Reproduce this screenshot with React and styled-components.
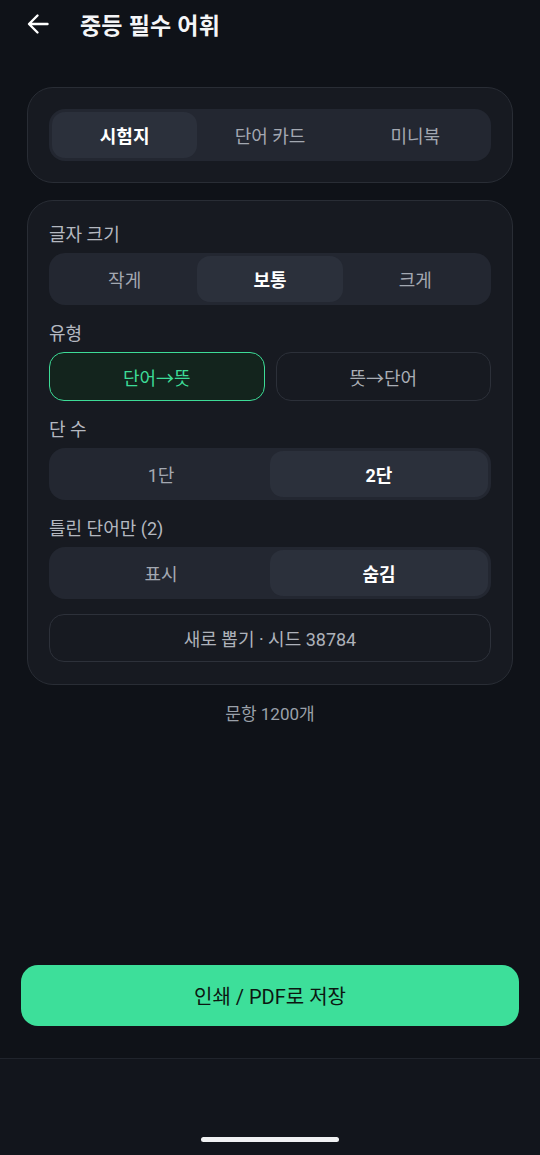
import React, { useState } from "react";
import styled, { createGlobalStyle } from "styled-components";

const GlobalStyle = createGlobalStyle`
  * { box-sizing: border-box; }
  html, body {
    margin: 0;
    padding: 0;
    background: #0f1218;
    font-family: Roboto, "Noto Sans CJK KR", "Noto Sans", sans-serif;
    -webkit-font-smoothing: antialiased;
  }
`;

const Page = styled.div`
  min-height: 1155px;
  display: flex;
  flex-direction: column;
  background: #0f1218;
  color: #fff;
`;

const Header = styled.header`
  height: 47px;
  display: flex;
  align-items: center;
  gap: 30px;
  padding-left: 26px;
`;

const BackButton = styled.button`
  width: 24px;
  height: 24px;
  padding: 0;
  border: none;
  background: none;
  color: #fff;
  display: flex;
  align-items: center;
  justify-content: center;
`;

const Title = styled.h1`
  margin: 0;
  font-size: 23px;
  font-weight: 700;
  letter-spacing: 0.2px;
  color: #f4f5f7;
`;

const Main = styled.main`
  padding: 40px 27px 0;
  display: flex;
  flex-direction: column;
  gap: 17px;
`;

const Card = styled.section`
  background: #171a21;
  border: 1px solid #292d35;
  border-radius: 26px;
  padding: 21px 21px ${({ $bottom }) => $bottom || 21}px;
`;

const Segmented = styled.div`
  display: flex;
  height: 52px;
  padding: 3px;
  background: #232731;
  border-radius: 16px;
`;

const SegItem = styled.button`
  flex: 1;
  border: none;
  border-radius: 13px;
  background: ${({ $active }) => ($active ? "#2b303b" : "transparent")};
  color: ${({ $active }) => ($active ? "#ffffff" : "#a3a8b1")};
  font-family: inherit;
  font-size: 18px;
  font-weight: ${({ $active }) => ($active ? 700 : 400)};
`;

const Section = styled.div`
  margin-top: ${({ $first }) => ($first ? 0 : 17)}px;
`;

const Label = styled.div`
  font-size: 18px;
  line-height: 24px;
  color: #b4b8c0;
  margin-bottom: 6px;
  padding-top: ${({ $first }) => ($first ? 1 : 0)}px;
`;

const TypeRow = styled.div`
  display: flex;
  gap: 11px;
`;

const TypeButton = styled.button`
  flex: 1;
  height: 49px;
  border-radius: 15px;
  border: ${({ $active }) => ($active ? "1.5px solid #3ddc97" : "1px solid #2c3039")};
  background: ${({ $active }) => ($active ? "#13241d" : "transparent")};
  color: ${({ $active }) => ($active ? "#3ddc97" : "#a9aeb6")};
  font-family: inherit;
  font-size: 18px;
`;

const Reseed = styled.button`
  width: 100%;
  height: 48px;
  margin-top: 15px;
  border-radius: 15px;
  border: 1px solid #2d313a;
  background: transparent;
  color: #aeb2ba;
  font-family: inherit;
  font-size: 18px;
`;

const Count = styled.div`
  text-align: center;
  font-size: 17px;
  line-height: 24px;
  color: #9aa0a9;
`;

const Spacer = styled.div`
  flex: 1;
`;

const ActionArea = styled.div`
  padding: 0 21px 32px;
`;

const PrintButton = styled.button`
  width: 100%;
  height: 61px;
  border: none;
  border-radius: 17px;
  background: #3ddf9a;
  color: #0c1611;
  font-family: inherit;
  font-size: 20px;
  font-weight: 400;
`;

const NavBar = styled.div`
  height: 97px;
  background: #12151c;
  border-top: 1px solid #20242c;
  display: flex;
  align-items: flex-end;
  justify-content: center;
  padding-bottom: 13px;
`;

const HomeIndicator = styled.div`
  width: 138px;
  height: 5px;
  border-radius: 3px;
  background: #f0f1f3;
`;

const ArrowLeft = () => (
  <svg width="24" height="24" viewBox="0 0 24 24" fill="none">
    <path
      d="M21.5 12H3.5M11.5 3.5L3 12l8.5 8.5"
      stroke="currentColor"
      strokeWidth="2.4"
      strokeLinecap="round"
      strokeLinejoin="round"
    />
  </svg>
);

const Segment = ({ options, value, onChange }) => (
  <Segmented>
    {options.map((o) => (
      <SegItem key={o} $active={o === value} onClick={() => onChange(o)}>
        {o}
      </SegItem>
    ))}
  </Segmented>
);

export default function App() {
  const [mode, setMode] = useState("시험지");
  const [size, setSize] = useState("보통");
  const [type, setType] = useState("단어→뜻");
  const [cols, setCols] = useState("2단");
  const [wrong, setWrong] = useState("숨김");

  return (
    <Page>
      <GlobalStyle />
      <Header>
        <BackButton aria-label="뒤로">
          <ArrowLeft />
        </BackButton>
        <Title>중등 필수 어휘</Title>
      </Header>

      <Main>
        <Card>
          <Segment
            options={["시험지", "단어 카드", "미니북"]}
            value={mode}
            onChange={setMode}
          />
        </Card>

        <Card $bottom={22}>
          <Section $first>
            <Label $first>글자 크기</Label>
            <Segment options={["작게", "보통", "크게"]} value={size} onChange={setSize} />
          </Section>
          <Section>
            <Label>유형</Label>
            <TypeRow>
              {["단어→뜻", "뜻→단어"].map((t) => (
                <TypeButton key={t} $active={t === type} onClick={() => setType(t)}>
                  {t}
                </TypeButton>
              ))}
            </TypeRow>
          </Section>
          <Section>
            <Label>단 수</Label>
            <Segment options={["1단", "2단"]} value={cols} onChange={setCols} />
          </Section>
          <Section>
            <Label>틀린 단어만 (2)</Label>
            <Segment options={["표시", "숨김"]} value={wrong} onChange={setWrong} />
          </Section>
          <Reseed>새로 뽑기 · 시드 38784</Reseed>
        </Card>

        <Count>문항 1200개</Count>
      </Main>

      <Spacer />

      <ActionArea>
        <PrintButton>인쇄 / PDF로 저장</PrintButton>
      </ActionArea>

      <NavBar>
        <HomeIndicator />
      </NavBar>
    </Page>
  );
}
